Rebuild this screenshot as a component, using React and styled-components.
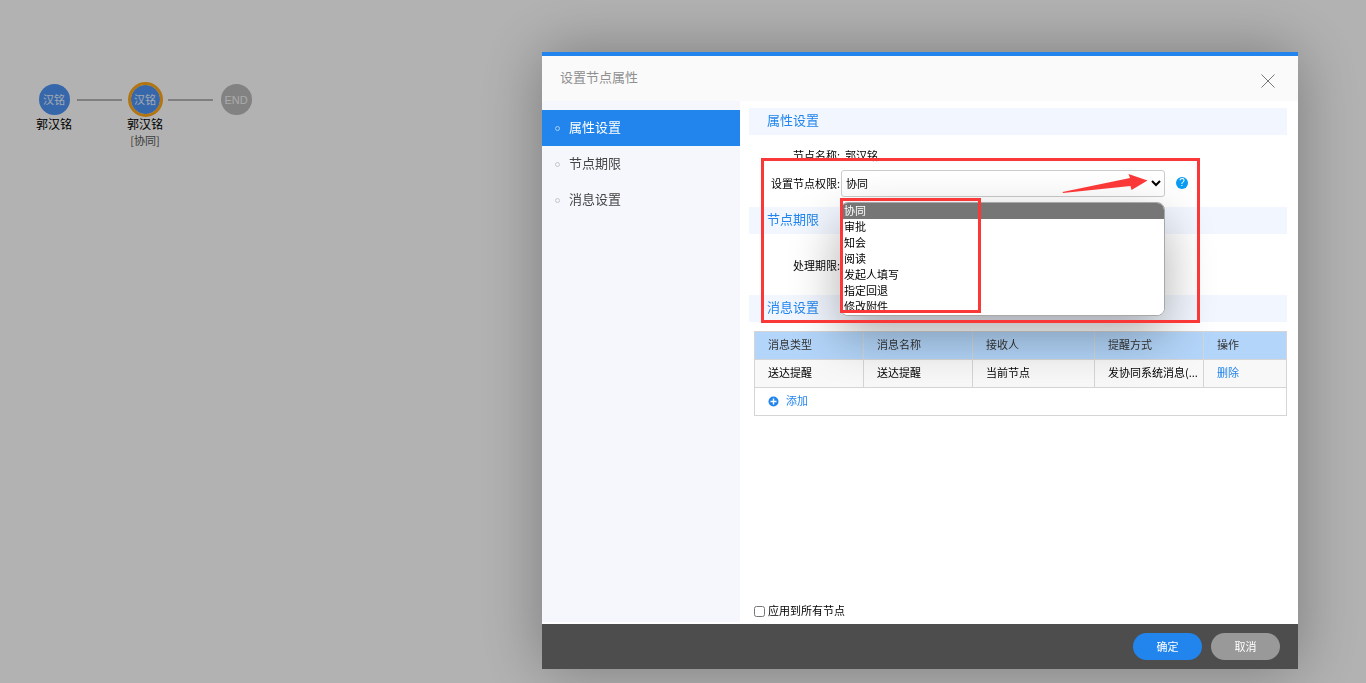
import React, { useState } from "react";
import styled, { createGlobalStyle } from "styled-components";

const GlobalStyle = createGlobalStyle`
  *,
  *::before {
    box-sizing: border-box;
  }
  body {
    margin: 0;
    background: #fff;
    color: #000;
    font-family: "Noto Sans CJK SC", "Liberation Sans", sans-serif;
    font-size: 11px;
    line-height: 16px;
  }
  button, select, input {
    font-family: inherit;
    font-size: inherit;
  }
`;

const Page = styled.div`
  min-height: 100vh;
`;

const Flow = styled.div`
  display: flex;
  align-items: flex-start;
  padding: 82px 31px;
`;

const FlowNode = styled.div`
  display: flex;
  flex-direction: column;
  align-items: center;
  width: 46px;
  font-size: 12px;
  line-height: 14px;
  white-space: nowrap;
`;

const Avatar = styled.div`
  display: flex;
  align-items: center;
  justify-content: center;
  width: 35px;
  height: 35px;
  padding-bottom: ${(props) => (props.$end ? "0" : "2px")};
  border: 2px solid ${(props) => (props.$active ? "#ffa81a" : "transparent")};
  border-width: ${(props) => (props.$active ? "3px" : "2px")};
  border-radius: 50%;
  background: ${(props) => (props.$end ? "#bababa" : "#4f94f5")};
  background-clip: padding-box;
  color: ${(props) => (props.$end ? "#f4f4f4" : "#e6f0ff")};
  font-family: ${(props) => (props.$end ? '"Liberation Sans", sans-serif' : "inherit")};
  font-size: 11px;
`;

const NodeType = styled.div`
  margin-top: 2px;
  color: #555;
  font-size: 11px;
`;

const FlowLine = styled.div`
  width: 45px;
  height: 2px;
  margin-top: 17px;
  background: #b5b7b5;
`;

const Overlay = styled.div`
  position: fixed;
  inset: 0;
  display: flex;
  padding: 52px 68px 14px 542px;
  background: rgba(0, 0, 0, 0.3);
`;

const Dialog = styled.section`
  display: flex;
  flex: 1;
  flex-direction: column;
  min-width: 0;
  border-top: 4px solid #2185ed;
  background: #fff;
  box-shadow: 0 0 60px rgba(0, 0, 0, 0.32);
`;

const DialogHeader = styled.header`
  display: flex;
  align-items: center;
  justify-content: space-between;
  height: 45px;
  padding: 0 20px 0 18px;
  background: #fafafa;

  h1 {
    margin: 0 0 4px;
    color: #8f8f8f;
    font-size: 13px;
    font-weight: 400;
  }
`;

const CloseButton = styled.button`
  display: flex;
  align-items: center;
  justify-content: center;
  width: 20px;
  height: 20px;
  margin-top: 5px;
  padding: 0;
  border: 0;
  background: none;
  cursor: pointer;
`;

const DialogBody = styled.div`
  display: flex;
  flex: 1;
  min-height: 0;
`;

const Sidebar = styled.nav`
  flex: 0 0 198px;
  margin-bottom: 2px;
  padding-top: 9px;
  background: #f5f7fc;
`;

const NavItem = styled.button`
  display: flex;
  align-items: center;
  gap: 9px;
  width: 100%;
  height: 36px;
  padding: 0 13px 4px;
  border: 0;
  background: ${(props) => (props.$active ? "#2185ed" : "transparent")};
  color: ${(props) => (props.$active ? "#fff" : "#444")};
  font-size: 13px;
  cursor: pointer;

  &::before {
    content: "";
    width: 5px;
    height: 5px;
    margin-top: 5px;
    border: 1px solid ${(props) => (props.$active ? "#a9cdf6" : "#c3c5ca")};
    border-radius: 50%;
  }
`;

const Content = styled.main`
  position: relative;
  display: flex;
  flex: 1;
  flex-direction: column;
  min-width: 0;
  padding: 7px 11px 6px 9px;
`;

const SectionTitle = styled.h2`
  height: 27px;
  margin: 0;
  padding-left: 18px;
  background: #f2f7ff;
  color: #2185ed;
  font-size: 13px;
  font-weight: 400;
  line-height: 23px;
`;

const Fields = styled.div`
  display: flex;
  flex-direction: column;
  gap: 5px;
  padding: ${(props) => props.$pad};
`;

const Field = styled.div`
  display: flex;
  align-items: center;
  min-height: 18px;
`;

const FieldLabel = styled.label`
  width: 92px;
  padding: 0 1px 2px 0;
  text-align: right;
  white-space: nowrap;
`;

const FieldValue = styled.span`
  padding: 0 0 2px 4px;
`;

const SelectWrap = styled.div`
  position: relative;
  width: 324px;

  select {
    display: block;
    width: 100%;
    height: 27px;
    padding: 0 0 2px;
    border: 1px solid #ccc;
    border-radius: 3px;
    background-color: #fff;
    color: #000;
  }
`;

const OptionList = styled.ul`
  position: absolute;
  z-index: 1;
  top: 32px;
  left: -1px;
  width: 325px;
  margin: 0;
  padding: 0;
  overflow: hidden;
  border: 1px solid #a8a8a8;
  border-radius: 8px;
  background: #fff;
  box-shadow: 0 20px 50px rgba(0, 0, 0, 0.32);
  list-style: none;
`;

const Option = styled.li`
  height: 16px;
  padding-left: 3px;
  background: ${(props) => (props.$selected ? "#767676" : "#fff")};
  color: ${(props) => (props.$selected ? "#fff" : "#000")};
  line-height: 14px;
`;

const HelpButton = styled.button`
  width: 12px;
  height: 12px;
  margin: 0 0 1px 11px;
  padding: 0;
  border: 0;
  border-radius: 50%;
  background: #0a9bf5;
  color: #fff;
  font-family: "Liberation Sans", sans-serif;
  font-size: 10px;
  line-height: 12px;
  text-align: center;
`;

const MessageTable = styled.table`
  width: calc(100% - 5px);
  margin: 9px 0 0 5px;
  border-collapse: collapse;
  table-layout: fixed;

  th,
  td {
    height: 28px;
    padding: 0 5px 3px 13px;
    overflow: hidden;
    border: 1px solid #d5d5d5;
    font-weight: 400;
    text-align: left;
    white-space: nowrap;
  }
  th {
    width: 109px;
    background: #b3d5f9;
    color: #333;
  }
  th:nth-child(3) {
    width: 122px;
  }
  th:last-child {
    width: auto;
  }
  tbody td {
    background: #f8f8f8;
  }
  tfoot td {
    background: #fff;
  }
  a {
    color: #2185ed;
    text-decoration: none;
  }
`;

const AddButton = styled.button`
  display: flex;
  align-items: center;
  gap: 7px;
  padding: 0;
  border: 0;
  background: none;
  color: #2185ed;
  cursor: pointer;

  svg {
    margin-top: 3px;
  }
`;

const ApplyAll = styled.label`
  display: flex;
  align-items: center;
  gap: 3px;
  margin-top: auto;
  padding-left: 5px;

  input {
    width: 11px;
    height: 11px;
    margin: 3px 0 0;
  }
`;

const DialogFooter = styled.footer`
  display: flex;
  align-items: center;
  justify-content: flex-end;
  gap: 9px;
  height: 45px;
  padding: 0 18px;
  background: #4d4d4d;
`;

const PillButton = styled.button`
  min-width: 69px;
  height: 27px;
  padding: 0 0 2px;
  border: 0;
  border-radius: 14px;
  background: ${(props) => (props.$primary ? "#2185ed" : "#999")};
  color: #fff;
  cursor: pointer;
`;

// red marks drawn on top of the form
const AreaMark = styled.div`
  position: absolute;
  z-index: 2;
  top: 57px;
  left: 21px;
  width: 439px;
  height: 165px;
  border: 3px solid #fb3838;
  pointer-events: none;
`;

const ListMark = styled.div`
  position: absolute;
  z-index: 2;
  top: 28px;
  left: -1px;
  width: 141px;
  height: 115px;
  border: 3px solid #fb3838;
  pointer-events: none;
`;

const ArrowMark = styled.svg`
  position: absolute;
  z-index: 2;
  top: 3px;
  right: 17px;
  pointer-events: none;
`;

const navItems = ["属性设置", "节点期限", "消息设置"];
const permissions = ["协同", "审批", "知会", "阅读", "发起人填写", "指定回退", "修改附件"];
const columns = ["消息类型", "消息名称", "接收人", "提醒方式", "操作"];
const messages = [
  { type: "送达提醒", name: "送达提醒", receiver: "当前节点", method: "发协同系统消息(..." },
];

const NodeFlow = () => (
  <Flow>
    <FlowNode>
      <Avatar>汉铭</Avatar>
      <div>郭汉铭</div>
    </FlowNode>
    <FlowLine />
    <FlowNode>
      <Avatar $active>汉铭</Avatar>
      <div>郭汉铭</div>
      <NodeType>[协同]</NodeType>
    </FlowNode>
    <FlowLine />
    <FlowNode>
      <Avatar $end>END</Avatar>
    </FlowNode>
  </Flow>
);

const App = () => {
  const [activeNav, setActiveNav] = useState(0);
  const [permission, setPermission] = useState("协同");
  const [applyAll, setApplyAll] = useState(false);

  return (
    <Page>
      <GlobalStyle />
      <NodeFlow />
      <Overlay>
        <Dialog role="dialog" aria-labelledby="dialog-title">
          <DialogHeader>
            <h1 id="dialog-title">设置节点属性</h1>
            <CloseButton type="button" aria-label="关闭">
              <svg width="14" height="14" viewBox="0 0 14 14" stroke="#777" strokeWidth="1">
                <path d="M0.5 0.5L13.5 13.5M13.5 0.5L0.5 13.5" />
              </svg>
            </CloseButton>
          </DialogHeader>
          <DialogBody>
            <Sidebar>
              {navItems.map((item, index) => (
                <NavItem
                  key={item}
                  type="button"
                  $active={index === activeNav}
                  onClick={() => setActiveNav(index)}
                >
                  {item}
                </NavItem>
              ))}
            </Sidebar>
            <Content>
              <SectionTitle>属性设置</SectionTitle>
              <Fields $pad="12px 0 10px">
                <Field>
                  <FieldLabel as="span">节点名称:</FieldLabel>
                  <FieldValue>郭汉铭</FieldValue>
                </Field>
                <Field>
                  <FieldLabel htmlFor="permission">设置节点权限:</FieldLabel>
                  <SelectWrap>
                    <select
                      id="permission"
                      value={permission}
                      onChange={(e) => setPermission(e.target.value)}
                    >
                      {permissions.map((item) => (
                        <option key={item}>{item}</option>
                      ))}
                    </select>
                    <OptionList role="listbox" aria-label="设置节点权限">
                      {permissions.map((item) => (
                        <Option
                          key={item}
                          role="option"
                          aria-selected={item === permission}
                          $selected={item === permission}
                          onClick={() => setPermission(item)}
                        >
                          {item}
                        </Option>
                      ))}
                    </OptionList>
                    <ListMark />
                    <ArrowMark width="86" height="21" viewBox="0 0 86 21" fill="#fb3838">
                      <path d="M0.5 19L68 5L66.5 1L85.5 7.5L69.5 17L68.5 13L1 20Z" />
                    </ArrowMark>
                  </SelectWrap>
                  <HelpButton type="button" aria-label="帮助">
                    ?
                  </HelpButton>
                </Field>
              </Fields>

              <SectionTitle>节点期限</SectionTitle>
              <Fields $pad="18px 0 16px">
                <Field>
                  <FieldLabel htmlFor="deadline">处理期限:</FieldLabel>
                  <SelectWrap>
                    <select id="deadline" />
                  </SelectWrap>
                </Field>
              </Fields>

              <SectionTitle>消息设置</SectionTitle>
              <MessageTable>
                <thead>
                  <tr>
                    {columns.map((column) => (
                      <th key={column}>{column}</th>
                    ))}
                  </tr>
                </thead>
                <tbody>
                  {messages.map((message) => (
                    <tr key={message.name}>
                      <td>{message.type}</td>
                      <td>{message.name}</td>
                      <td>{message.receiver}</td>
                      <td>{message.method}</td>
                      <td>
                        <a href="#delete">删除</a>
                      </td>
                    </tr>
                  ))}
                </tbody>
                <tfoot>
                  <tr>
                    <td colSpan={5}>
                      <AddButton type="button">
                        <svg width="11" height="11" viewBox="0 0 11 11">
                          <circle cx="5.5" cy="5.5" r="5" fill="#2185ed" />
                          <path d="M5.5 2.5V8.5M2.5 5.5H8.5" stroke="#fff" strokeWidth="1.4" />
                        </svg>
                        添加
                      </AddButton>
                    </td>
                  </tr>
                </tfoot>
              </MessageTable>

              <ApplyAll>
                <input
                  type="checkbox"
                  checked={applyAll}
                  onChange={(e) => setApplyAll(e.target.checked)}
                />
                应用到所有节点
              </ApplyAll>
              <AreaMark />
            </Content>
          </DialogBody>
          <DialogFooter>
            <PillButton type="button" $primary>
              确定
            </PillButton>
            <PillButton type="button">取消</PillButton>
          </DialogFooter>
        </Dialog>
      </Overlay>
    </Page>
  );
};

export default App;
